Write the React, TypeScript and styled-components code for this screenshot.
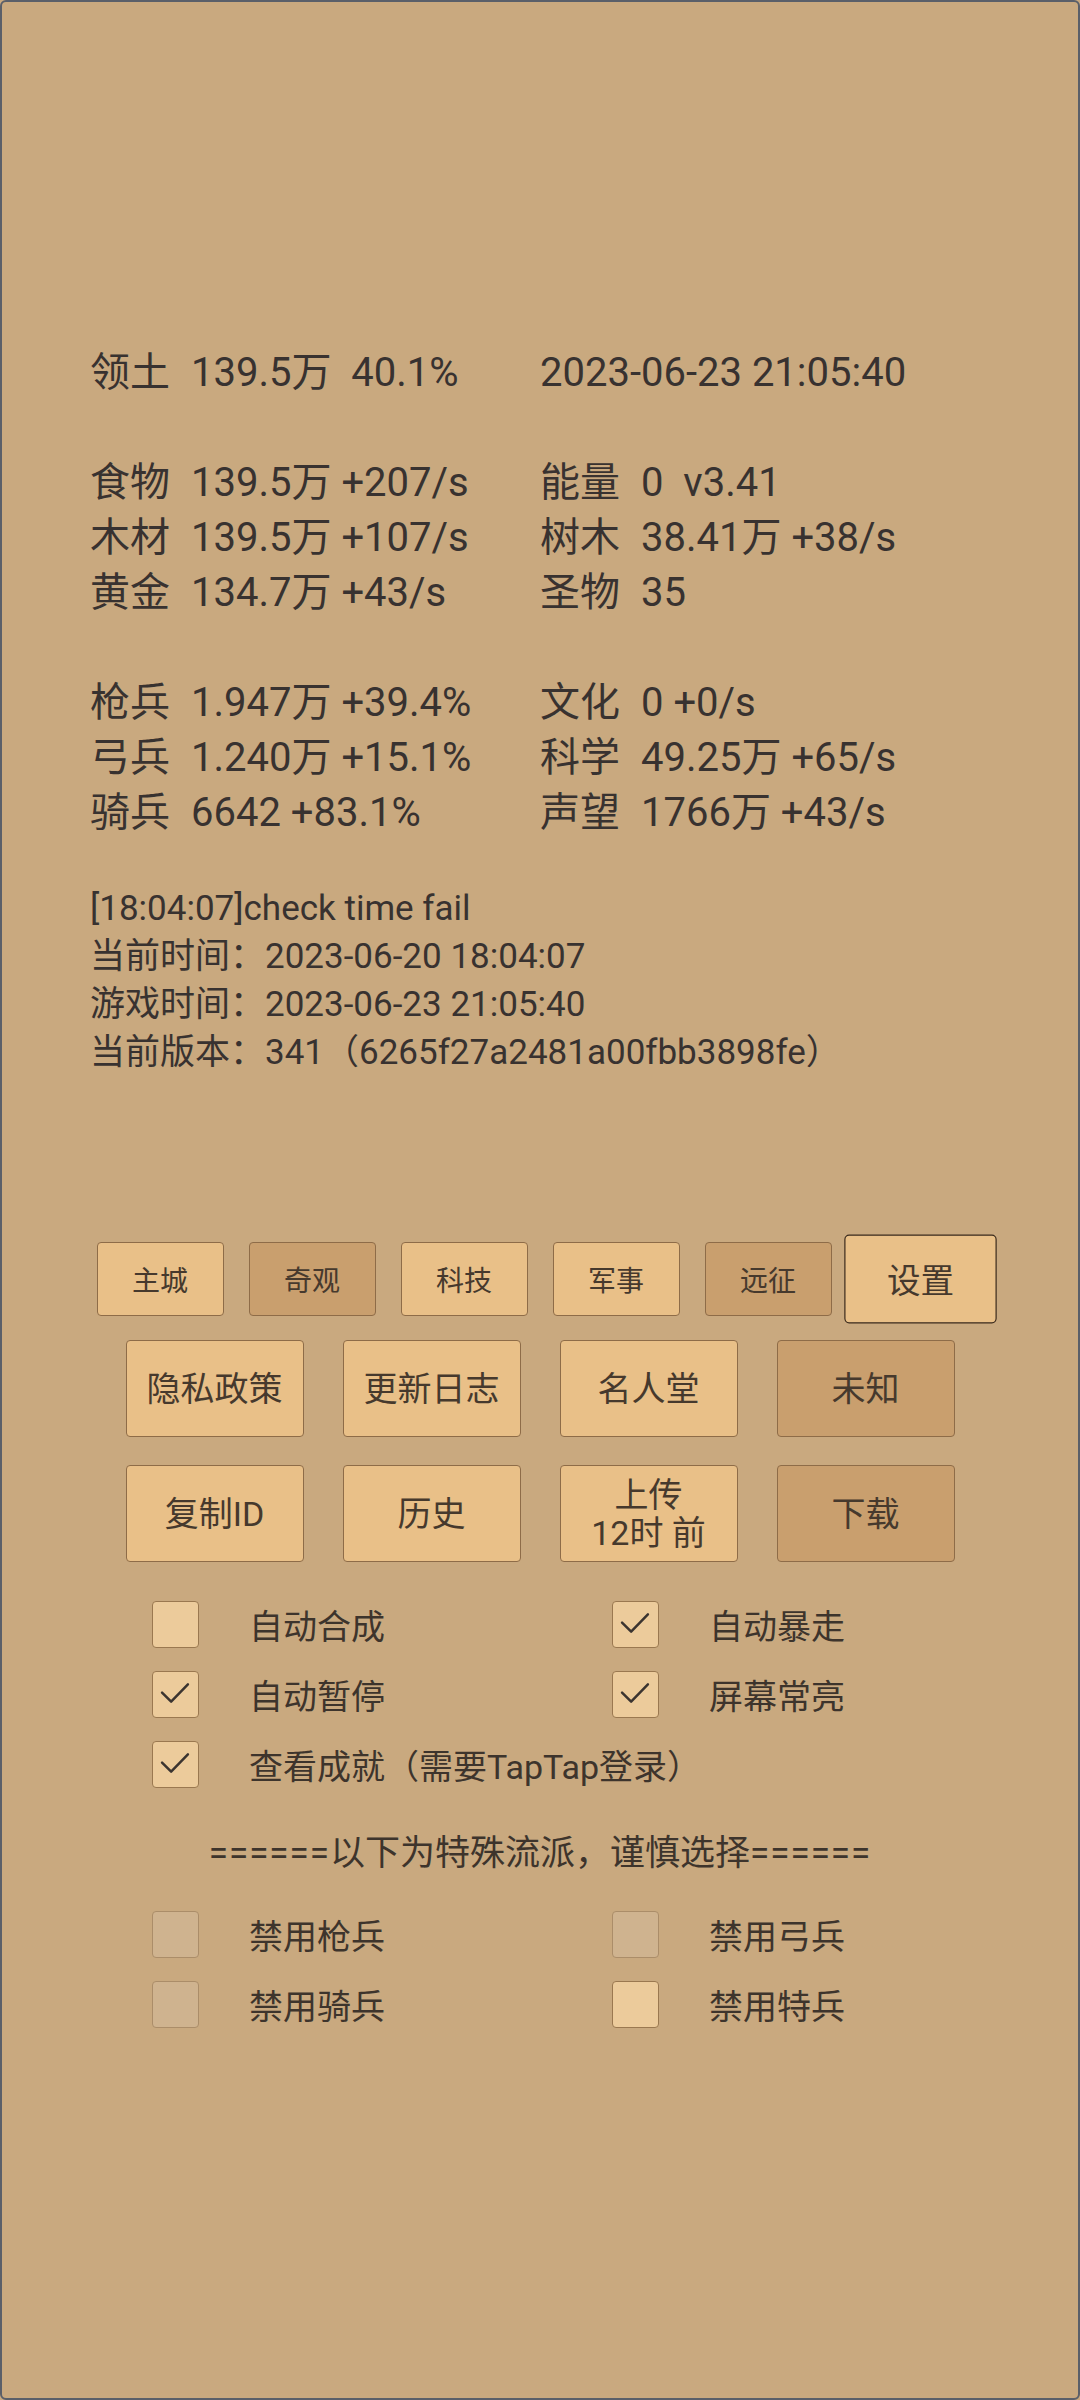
import React from "react";
import styled, { createGlobalStyle } from "styled-components";

interface Stat {
    label: string;
    value: string;
}

type StatRow = [Stat, Stat | null] | null;

const statRows: StatRow[] = [
    [{ label: "领土", value: "139.5万  40.1%" }, { label: "", value: "2023-06-23 21:05:40" }],
    null,
    [{ label: "食物", value: "139.5万 +207/s" }, { label: "能量", value: "0  v3.41" }],
    [{ label: "木材", value: "139.5万 +107/s" }, { label: "树木", value: "38.41万 +38/s" }],
    [{ label: "黄金", value: "134.7万 +43/s" }, { label: "圣物", value: "35" }],
    null,
    [{ label: "枪兵", value: "1.947万 +39.4%" }, { label: "文化", value: "0 +0/s" }],
    [{ label: "弓兵", value: "1.240万 +15.1%" }, { label: "科学", value: "49.25万 +65/s" }],
    [{ label: "骑兵", value: "6642 +83.1%" }, { label: "声望", value: "1766万 +43/s" }],
];

const logLines = [
    "[18:04:07]check time fail",
    "当前时间：2023-06-20 18:04:07",
    "游戏时间：2023-06-23 21:05:40",
    "当前版本：341（6265f27a2481a00fbb3898fe）",
];

const tabs = [
    { name: "主城", dark: false, active: false },
    { name: "奇观", dark: true, active: false },
    { name: "科技", dark: false, active: false },
    { name: "军事", dark: false, active: false },
    { name: "远征", dark: true, active: false },
    { name: "设置", dark: false, active: true },
];

const actionRows = [
    [
        { name: "隐私政策", dark: false },
        { name: "更新日志", dark: false },
        { name: "名人堂", dark: false },
        { name: "未知", dark: true },
    ],
    [
        { name: "复制ID", dark: false },
        { name: "历史", dark: false },
        { name: "上传\n12时 前", dark: false },
        { name: "下载", dark: true },
    ],
];

const options = [
    { label: "自动合成", checked: false },
    { label: "自动暴走", checked: true },
    { label: "自动暂停", checked: true },
    { label: "屏幕常亮", checked: true },
    { label: "查看成就（需要TapTap登录）", checked: true },
];

const bans = [
    { label: "禁用枪兵", disabled: true },
    { label: "禁用弓兵", disabled: true },
    { label: "禁用骑兵", disabled: true },
    { label: "禁用特兵", disabled: false },
];

const CheckBox: React.FC<{ checked?: boolean; disabled?: boolean }> = ({ checked, disabled }) => (
    <Box $disabled={disabled}>
        {checked && (
            <svg width="47" height="47" viewBox="0 0 47 47">
                <polyline
                    points="10.5,22.5 20,32 37.5,14"
                    fill="none"
                    stroke="#3b3430"
                    strokeWidth="2.6"
                    strokeLinecap="round"
                    strokeLinejoin="round"
                />
            </svg>
        )}
    </Box>
);

const App: React.FC = () => {
    return (
        <>
            <GlobalStyle />
            <Page>
                <StatGrid>
                    {statRows.map((row, i) =>
                        row === null ? (
                            <BlankRow key={i} />
                        ) : (
                            row.map((stat, j) => (
                                <StatCell key={`${i}-${j}`}>
                                    {stat && stat.label && <StatLabel>{stat.label}</StatLabel>}
                                    {stat && stat.value}
                                </StatCell>
                            ))
                        )
                    )}
                </StatGrid>

                <Log>
                    {logLines.map((line) => (
                        <div key={line}>{line}</div>
                    ))}
                </Log>

                <TabRow>
                    {tabs.map((tab) => (
                        <TabButton key={tab.name} $dark={tab.dark} $active={tab.active}>
                            {tab.name}
                        </TabButton>
                    ))}
                </TabRow>

                {actionRows.map((row, i) => (
                    <ActionRow key={i} $first={i === 0}>
                        {row.map((btn) => (
                            <ActionButton key={btn.name} $dark={btn.dark}>
                                {btn.name}
                            </ActionButton>
                        ))}
                    </ActionRow>
                ))}

                <CheckGrid $top={27}>
                    {options.map((opt) => (
                        <CheckItem key={opt.label} $wide={opt.label.length > 6}>
                            <CheckBox checked={opt.checked} />
                            <CheckLabel>{opt.label}</CheckLabel>
                        </CheckItem>
                    ))}
                </CheckGrid>

                <Divider>
                    <Rule>======</Rule>以下为特殊流派，谨慎选择<Rule>======</Rule>
                </Divider>

                <CheckGrid $top={20}>
                    {bans.map((ban) => (
                        <CheckItem key={ban.label}>
                            <CheckBox disabled={ban.disabled} />
                            <CheckLabel>{ban.label}</CheckLabel>
                        </CheckItem>
                    ))}
                </CheckGrid>
            </Page>
        </>
    );
};

export default App;

// styles
const GlobalStyle = createGlobalStyle`
    body {
        margin: 0;
        background: #c9a97f;
        font-family: Roboto, "Noto Sans CJK SC", sans-serif;
    }
`;

const Page = styled.div`
    width: 1080px;
    height: 2400px;
    box-sizing: border-box;
    border: 2px solid #5a5f69;
    border-radius: 6px;
    background-color: #c9a97f;
    color: #383230;
    display: flex;
    flex-direction: column;
    padding-top: 343px;
`;

const StatGrid = styled.div`
    display: grid;
    grid-template-columns: 450px 1fr;
    padding-left: 88px;
    font-size: 40px;
    line-height: 55px;
`;

const BlankRow = styled.div`
    grid-column: 1 / -1;
    height: 55px;
`;

const StatCell = styled.div`
    white-space: pre;
`;

const StatLabel = styled.span`
    display: inline-block;
    width: 101px;
`;

const Log = styled.div`
    margin-top: 45px;
    padding-left: 88px;
    font-size: 35px;
    line-height: 48px;
    white-space: pre;
`;

const TabRow = styled.div`
    display: flex;
    justify-content: center;
    gap: 25px;
    margin-top: 165px;
`;

const TabButton = styled.div<{ $dark?: boolean; $active?: boolean }>`
    width: 127px;
    height: 74px;
    box-sizing: border-box;
    display: flex;
    align-items: center;
    justify-content: center;
    font-size: 28px;
    color: #46392d;
    background-color: ${(p) => (p.$dark ? "#c99f6e" : "#e9c088")};
    border: 1.5px solid ${(p) => (p.$active ? "#3a2a1c" : "#8e6c48")};
    border-radius: 4px;
    transform: ${(p) => (p.$active ? "scale(1.2)" : "none")};
`;

const ActionRow = styled.div<{ $first?: boolean }>`
    display: flex;
    justify-content: center;
    gap: 39px;
    margin-top: ${(p) => (p.$first ? "24px" : "28px")};
`;

const ActionButton = styled.div<{ $dark?: boolean }>`
    width: 178px;
    height: 97px;
    box-sizing: border-box;
    display: flex;
    align-items: center;
    justify-content: center;
    text-align: center;
    white-space: pre;
    font-size: 34px;
    line-height: 38px;
    color: #46392d;
    background-color: ${(p) => (p.$dark ? "#c99f6e" : "#e9c088")};
    border: 1.5px solid #8e6c48;
    border-radius: 4px;
`;

const CheckGrid = styled.div<{ $top: number }>`
    display: grid;
    grid-template-columns: 460px 460px;
    grid-auto-rows: 70px;
    padding-left: 150px;
    margin-top: ${(p) => p.$top}px;
`;

const CheckItem = styled.div<{ $wide?: boolean }>`
    display: flex;
    align-items: center;
    gap: 50px;
    grid-column: ${(p) => (p.$wide ? "1 / -1" : "auto")};
`;

const Box = styled.div<{ $disabled?: boolean }>`
    width: 47px;
    height: 47px;
    flex-shrink: 0;
    box-sizing: border-box;
    display: flex;
    align-items: center;
    justify-content: center;
    background-color: ${(p) => (p.$disabled ? "#cfb38f" : "#eccb9b")};
    border: 1.5px solid ${(p) => (p.$disabled ? "#ab8d69" : "#9a7850")};
    border-radius: 4px;

    svg {
        position: relative;
        left: -1px;
        top: -1px;
    }
`;

const CheckLabel = styled.span`
    font-size: 34px;
    color: #3d342c;
    white-space: pre;
`;

const Divider = styled.div`
    margin-top: 30px;
    text-align: center;
    font-size: 35px;
    line-height: 50px;
    color: #3d342c;
`;

const Rule = styled.span`
    letter-spacing: 1px;
`;
